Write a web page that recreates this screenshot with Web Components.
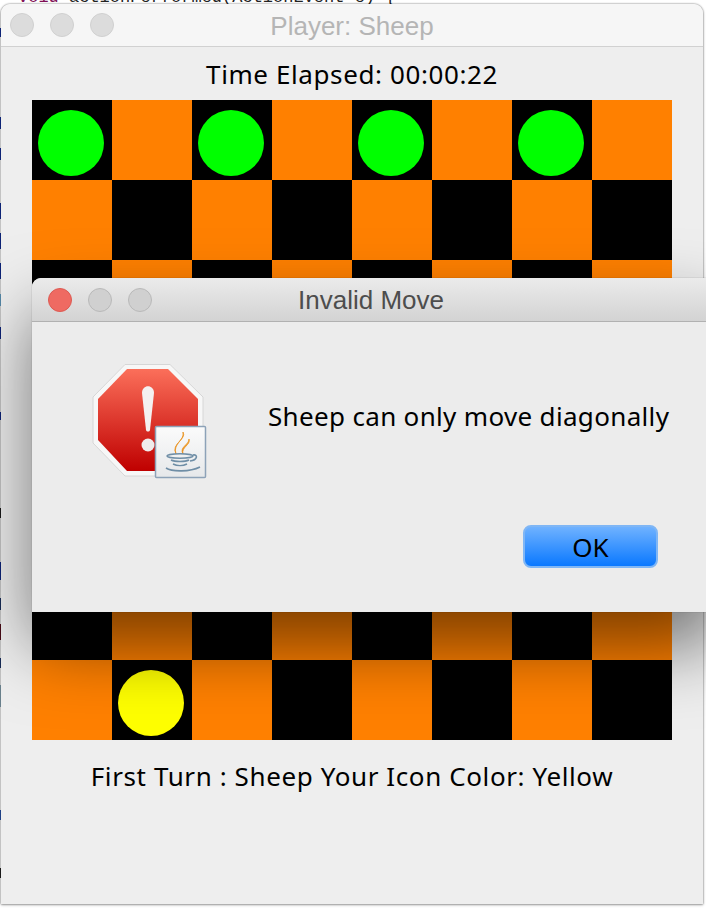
<!DOCTYPE html>
<html>
<head>
<meta charset="utf-8">
<style>
  html, body { margin: 0; height: 100%; background: #fff; overflow: hidden; }
  body { position: relative; width: 706px; height: 908px; font-family: "Noto Sans", sans-serif; }
</style>
</head>
<body>
<code-behind></code-behind>
<mac-window id="player" title="Player: Sheep" inactive>
  <game-label>Time Elapsed: 00:00:22</game-label>
  <game-board></game-board>
  <game-label class="turn">First Turn : Sheep Your Icon Color: Yellow</game-label>
</mac-window>
<mac-window id="dialog" title="Invalid Move">
  <alert-body>Sheep can only move diagonally</alert-body>
</mac-window>

<script>
// the editor that peeks out around the player window
class CodeBehind extends HTMLElement {
  constructor() {
    super();
    this.attachShadow({ mode: "open" });
    this.shadowRoot.innerHTML = `
      <style>
        :host { position: absolute; inset: 0; display: block; overflow: hidden; }
        .line {
          position: absolute; left: 18px; top: -11px; white-space: nowrap;
          font: 17px/17px "Liberation Mono", monospace; color: #222;
        }
        .line b { font-weight: normal; color: #7f0f55; }
        .strip {
          position: absolute; left: 0; top: 0; width: 2px; height: 100%;
          background:
            linear-gradient(#12309a, #12309a) 0 28px / 2px 9px no-repeat,
            linear-gradient(#12309a, #12309a) 0 117px / 2px 12px no-repeat,
            linear-gradient(#12309a, #12309a) 0 148px / 2px 12px no-repeat,
            linear-gradient(#12309a, #12309a) 0 203px / 2px 16px no-repeat,
            linear-gradient(#12309a, #12309a) 0 233px / 2px 16px no-repeat,
            linear-gradient(#12309a, #12309a) 0 263px / 2px 16px no-repeat,
            linear-gradient(#6fb0d8, #6fb0d8) 0 294px / 2px 12px no-repeat,
            linear-gradient(#12309a, #12309a) 0 327px / 2px 12px no-repeat,
            linear-gradient(#12309a, #12309a) 0 412px / 2px 8px no-repeat,
            linear-gradient(#222, #222) 0 508px / 2px 10px no-repeat,
            linear-gradient(#12309a, #12309a) 0 562px / 2px 18px no-repeat,
            linear-gradient(#203a70, #203a70) 0 598px / 2px 12px no-repeat,
            linear-gradient(#601020, #601020) 0 624px / 2px 16px no-repeat,
            linear-gradient(#203a70, #203a70) 0 658px / 2px 10px no-repeat,
            linear-gradient(#8aa8b8, #8aa8b8) 0 685px / 2px 22px no-repeat,
            linear-gradient(#2a55b0, #2a55b0) 0 810px / 2px 10px no-repeat,
            linear-gradient(#222, #222) 0 868px / 2px 10px no-repeat;
        }
      </style>
      <div class="line"><b>void</b> actionPerformed(ActionEvent e) {</div>
      <div class="strip"></div>`;
  }
}
customElements.define("code-behind", CodeBehind);

class MacWindow extends HTMLElement {
  constructor() {
    super();
    this.attachShadow({ mode: "open" });
    this.shadowRoot.innerHTML = `
      <style>
        :host {
          position: absolute; display: flex; flex-direction: column;
          background: #eeeeee; border-radius: 9px 9px 0 0; overflow: hidden;
          box-sizing: border-box;
        }
        :host(#player) {
          left: 1px; top: 4px; width: 702px; height: 900px;
          box-shadow: 0 0 2px rgba(0,0,0,.55), 0 1px 3px rgba(0,0,0,.3);
        }
        :host(#dialog) {
          left: 32px; top: 278px; width: 690px; height: 334px; background: #ececec;
          box-shadow: 0 0 1px rgba(0,0,0,.5), 0 34px 70px rgba(0,0,0,.52);
        }
        .bar {
          flex: none; display: flex; align-items: center; gap: 16px;
          height: 43px; padding-left: 16px; position: relative;
          background: linear-gradient(#ebebeb, #d3d3d3);
          border-bottom: 1px solid #b1b1b1;
        }
        :host([inactive]) .bar { background: #f6f6f6; border-bottom-color: #d1d1d1; height: 42px; padding-left: 9px; }
        .dot {
          width: 24px; height: 24px; box-sizing: border-box; border-radius: 50%;
          background: #d0d0d0; border: 1px solid #b9b9b9;
        }
        :host([inactive]) .dot { background: #dcdcdc; border-color: #d0d0d0; }
        :host(:not([inactive])) .dot:first-child { background: #ef6a62; border-color: #dd5a52; }
        .title {
          position: absolute; left: 0; right: 0; top: 2px; bottom: 0;
          display: flex; align-items: center; justify-content: center;
          font: 26px "Liberation Sans", Arial, sans-serif; color: #4d4d4d;
        }
        :host([inactive]) .title { color: #b5b5b5; }
        :host(#dialog) .title { right: 12px; }
        .body { flex: 1; display: flex; flex-direction: column; align-items: center; min-height: 0; }
      </style>
      <div class="bar">
        <span class="dot"></span><span class="dot"></span><span class="dot"></span>
        <span class="title"></span>
      </div>
      <div class="body"><slot></slot></div>`;
  }

  connectedCallback() {
    this.shadowRoot.querySelector(".title").textContent = this.getAttribute("title");
  }
}
customElements.define("mac-window", MacWindow);

class GameLabel extends HTMLElement {
  constructor() {
    super();
    this.attachShadow({ mode: "open" });
    this.shadowRoot.innerHTML = `
      <style>
        :host {
          display: block; height: 53px; text-align: center;
          font: 26px/55px "Noto Sans", sans-serif; letter-spacing: .6px; color: #000; white-space: nowrap;
        }
        :host(.turn) { height: 75px; line-height: 73px; }
      </style>
      <slot></slot>`;
  }
}
customElements.define("game-label", GameLabel);

class GameBoard extends HTMLElement {
  constructor() {
    super();
    this.attachShadow({ mode: "open" });
    let cells = "";
    for (let row = 0; row < 8; row++) {
      for (let col = 0; col < 8; col++) {
        let piece = "";
        if (row === 0 && col % 2 === 0) piece = `<i class="green"></i>`;
        if (row === 7 && col === 1) piece = `<i class="yellow"></i>`;
        cells += `<div class="${(row + col) % 2 ? "orange" : "black"}">${piece}</div>`;
      }
    }
    this.shadowRoot.innerHTML = `
      <style>
        :host { display: grid; grid-template-columns: repeat(8, 80px); grid-auto-rows: 80px; flex: none; }
        div { box-sizing: border-box; padding: 10px 0 0 6px; }
        .orange { background: #ff8000; }
        .black { background: #000; }
        i { display: block; width: 66px; height: 66px; border-radius: 50%; }
        .green { background: #00ff00; }
        .yellow { background: #ffff00; }
      </style>
      ${cells}`;
  }
}
customElements.define("game-board", GameBoard);

class AlertBody extends HTMLElement {
  constructor() {
    super();
    this.attachShadow({ mode: "open" });
    this.shadowRoot.innerHTML = `
      <style>
        :host { display: block; align-self: stretch; flex: 1; }
        .row { display: flex; align-items: flex-start; padding: 42px 0 0 60px; }
        svg { flex: none; display: block; filter: blur(.35px); }
        .msg {
          margin: 37px 0 0 60px; white-space: nowrap; color: #000;
          font: 26px/30px "Noto Sans", sans-serif; letter-spacing: .33px;
        }
        .foot { display: flex; justify-content: flex-end; padding-top: 45px; width: 626px; }
        button {
          width: 135px; height: 43px; border-radius: 8px; padding: 0;
          border: 2px solid #7fb6f5; color: #000;
          font: 26px "Noto Sans", sans-serif;
          background: linear-gradient(#6fb2ff, #0a78ff);
        }
      </style>
      <div class="row">
        <svg width="116" height="116" viewBox="0 0 116 116">
          <defs>
            <linearGradient id="red" x1="0" y1="0" x2="0" y2="1">
              <stop offset="0" stop-color="#fb6f5a"/>
              <stop offset="1" stop-color="#bf0000"/>
            </linearGradient>
            <linearGradient id="doc" x1="0" y1="0" x2="0" y2="1">
              <stop offset="0" stop-color="#fbfbfb"/>
              <stop offset="1" stop-color="#e6e8ea"/>
            </linearGradient>
            <linearGradient id="flame" x1="0" y1="0" x2="0" y2="1">
              <stop offset="0" stop-color="#f5b84a"/>
              <stop offset="1" stop-color="#e8861a"/>
            </linearGradient>
          </defs>
          <polygon points="33,0.5 78,0.5 111,33 111,79 78,112 33,112 1,79 1,33" fill="#f7f7f7" stroke="#d6d6d6"/>
          <polygon points="35,5 76,5 106,35 106,76 76,107 35,107 6,76 6,35" fill="url(#red)"/>
          <path d="M50 29 C50 20 62 20 62 29 L58 66 C57.500 68 54.500 68 54 66 Z" fill="#f4f0f0"/>
          <circle cx="56" cy="81" r="6.500" fill="#f0ecec"/>
          <rect x="63.500" y="62.500" width="50" height="51" rx="1" fill="url(#doc)" stroke="#8da2b8" stroke-width="1.500"/>
          <path d="M91 68 C95 75 80 79 84 90 C79 80 93 77 91 68 Z" fill="url(#flame)" stroke="#e8921f" stroke-width=".8"/>
          <path d="M97 75 C99 81 89 83 91 90 C87 83 97 81 97 75 Z" fill="url(#flame)" stroke="#e8921f" stroke-width=".8"/>
          <g fill="none" stroke="#6f8ea6" stroke-width="1.600">
            <ellipse cx="88" cy="92" rx="13" ry="2.200"/>
            <path d="M79 96 C83 98 93 98 97 96"/>
            <path d="M81 100 C85 102 91 102 95 100"/>
            <path d="M101 91 C106 90 106 96 98 97"/>
            <path d="M74 104 C80 108 98 108 108 103"/>
          </g>
        </svg>
        <div class="msg"><slot></slot></div>
      </div>
      <div class="foot"><button>OK</button></div>`;
  }
}
customElements.define("alert-body", AlertBody);
</script>
</body>
</html>
